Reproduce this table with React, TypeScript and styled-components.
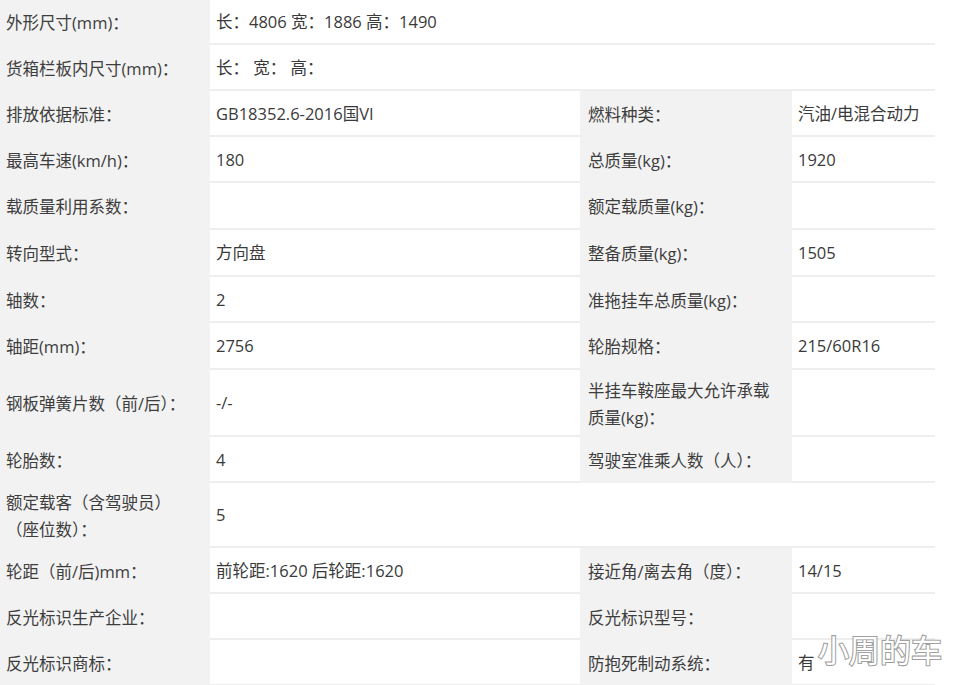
import React from "react";
import styled, { createGlobalStyle } from "styled-components";

const Global = createGlobalStyle`
  html, body { margin: 0; padding: 0; background: #ffffff; }
  body {
    font-family: "Open Sans", "Noto Sans CJK SC", sans-serif;
    color: #3a3a3a;
  }
`;

const Page = styled.div`
  position: relative;
  width: 955px;
  height: 685px;
  overflow: hidden;
  background: #ffffff;
`;

const Table = styled.div`
  width: 935px;
  display: flex;
  flex-direction: column;
`;

const Row = styled.div<{ $h: number }>`
  display: grid;
  grid-template-columns: 210px 370px 212px 143px;
  height: ${(p) => p.$h}px;
`;

const Label = styled.div<{ $pad?: number }>`
  background: #f2f2f2;
  display: flex;
  align-items: center;
  padding-left: ${(p) => p.$pad ?? 6}px;
  padding-right: 4px;
  font-family: "Open Sans", "Noto Sans CJK SC", sans-serif;
  font-size: 16.5px;
  line-height: 27px;
  color: #3d3d3d;
  box-sizing: border-box;
`;

const Value = styled.div<{ $span?: number; $pad?: number }>`
  background: #ffffff;
  display: flex;
  align-items: center;
  padding-left: ${(p) => p.$pad ?? 6}px;
  font-family: "Open Sans", "Noto Sans CJK SC", sans-serif;
  font-size: 16.5px;
  line-height: 27px;
  color: #3a3a3a;
  border-bottom: 2px solid #eeeeee;
  box-sizing: border-box;
  grid-column: span ${(p) => p.$span ?? 1};
  white-space: nowrap;
`;

const Watermark = styled.div`
  position: absolute;
  left: 818px;
  top: 629px;
  font-family: "Noto Sans CJK SC", sans-serif;
  font-size: 31px;
  font-weight: 400;
  color: #ffffff;
  -webkit-text-stroke: 2.2px #a0a0a0;
  paint-order: stroke fill;
  line-height: 40px;
`;

type Cell = { label: React.ReactNode; value?: string };
type RowData = { h: number; left: Cell; right?: Cell };

const rows: RowData[] = [
  { h: 45, left: { label: "外形尺寸(mm)：", value: "长：4806 宽：1886 高：1490" } },
  { h: 46, left: { label: "货箱栏板内尺寸(mm)：", value: "长： 宽： 高：" } },
  {
    h: 46,
    left: { label: "排放依据标准：", value: "GB18352.6-2016国VI" },
    right: { label: "燃料种类：", value: "汽油/电混合动力" },
  },
  {
    h: 46,
    left: { label: "最高车速(km/h)：", value: "180" },
    right: { label: "总质量(kg)：", value: "1920" },
  },
  {
    h: 47,
    left: { label: "载质量利用系数：", value: "" },
    right: { label: "额定载质量(kg)：", value: "" },
  },
  {
    h: 47,
    left: { label: "转向型式：", value: "方向盘" },
    right: { label: "整备质量(kg)：", value: "1505" },
  },
  {
    h: 46,
    left: { label: "轴数：", value: "2" },
    right: { label: "准拖挂车总质量(kg)：", value: "" },
  },
  {
    h: 47,
    left: { label: "轴距(mm)：", value: "2756" },
    right: { label: "轮胎规格：", value: "215/60R16" },
  },
  {
    h: 67,
    left: { label: "钢板弹簧片数（前/后）：", value: "-/-" },
    right: {
      label: (
        <span>
          半挂车鞍座最大允许承载
          <br />
          质量(kg)：
        </span>
      ),
      value: "",
    },
  },
  {
    h: 46,
    left: { label: "轮胎数：", value: "4" },
    right: { label: "驾驶室准乘人数（人）：", value: "" },
  },
  {
    h: 65,
    left: {
      label: (
        <span>
          额定载客（含驾驶员）
          <br />
          （座位数）：
        </span>
      ),
      value: "5",
    },
  },
  {
    h: 46,
    left: { label: "轮距（前/后)mm：", value: "前轮距:1620 后轮距:1620" },
    right: { label: "接近角/离去角（度）：", value: "14/15" },
  },
  {
    h: 46,
    left: { label: "反光标识生产企业：", value: "" },
    right: { label: "反光标识型号：", value: "" },
  },
  {
    h: 46,
    left: { label: "反光标识商标：", value: "" },
    right: { label: "防抱死制动系统：", value: "有" },
  },
];

export default function App() {
  return (
    <Page>
      <Global />
      <Table>
        {rows.map((r, i) => (
          <Row key={i} $h={r.h}>
            <Label>{r.left.label}</Label>
            <Value $span={r.right ? 1 : 3}>{r.left.value}</Value>
            {r.right && (
              <>
                <Label $pad={8}>{r.right.label}</Label>
                <Value>{r.right.value}</Value>
              </>
            )}
          </Row>
        ))}
      </Table>
      <Watermark>小周的车</Watermark>
    </Page>
  );
}
